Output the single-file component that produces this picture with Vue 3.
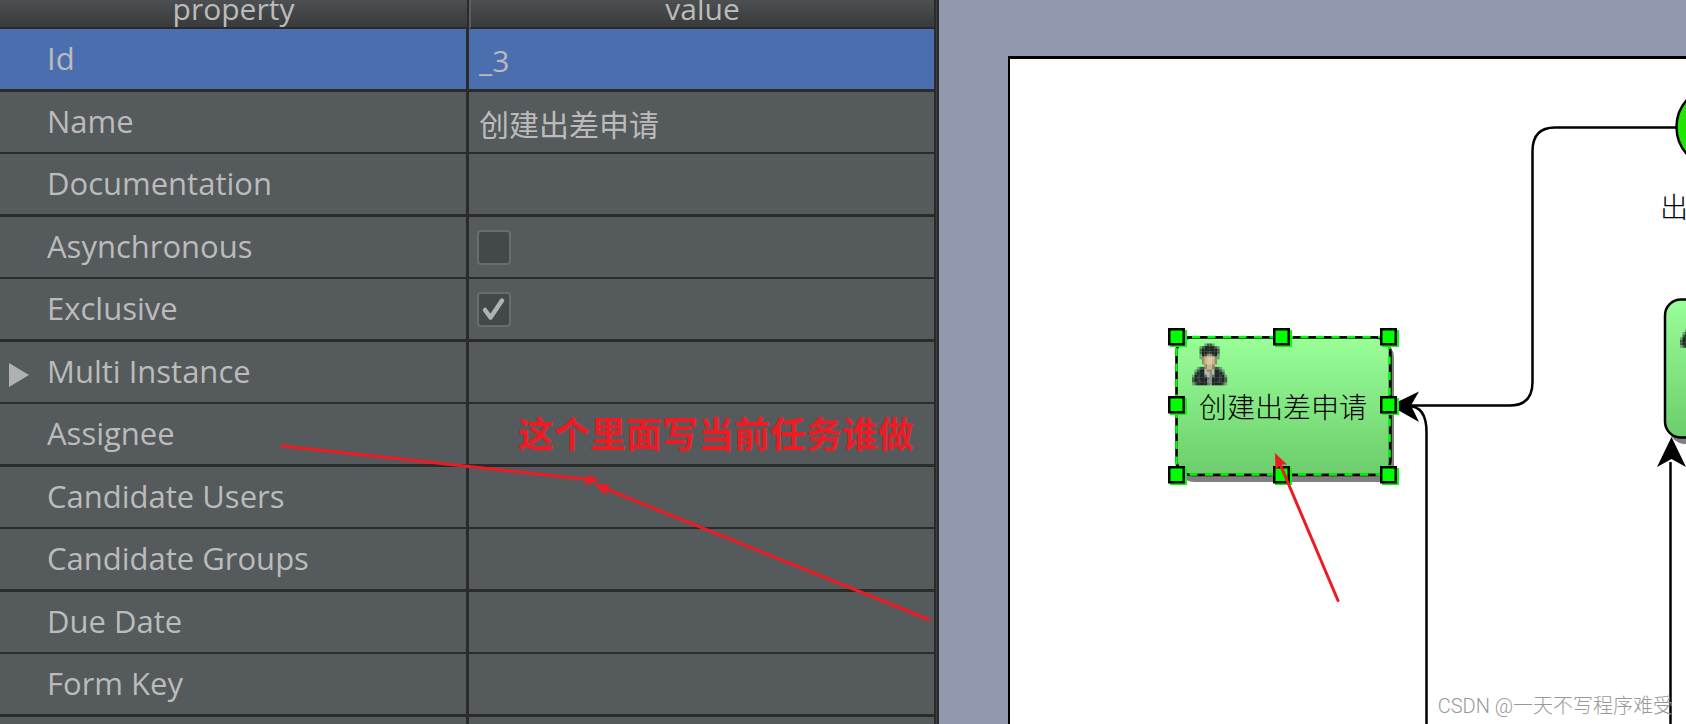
<script setup>
import { ref } from 'vue'

const rows = ref([
  { label: 'Id', kind: 'text', value: '_3', selected: true },
  { label: 'Name', kind: 'text', value: '创建出差申请' },
  { label: 'Documentation', kind: 'empty' },
  { label: 'Asynchronous', kind: 'check', value: false },
  { label: 'Exclusive', kind: 'check', value: true },
  { label: 'Multi Instance', kind: 'empty', expandable: true },
  { label: 'Assignee', kind: 'empty' },
  { label: 'Candidate Users', kind: 'empty' },
  { label: 'Candidate Groups', kind: 'empty' },
  { label: 'Due Date', kind: 'empty' },
  { label: 'Form Key', kind: 'empty' },
  { label: '', kind: 'empty' },
])

const handles = [
  [1168, 328], [1273, 328], [1380, 328],
  [1168, 396], [1380, 396],
  [1168, 466], [1273, 466], [1380, 466],
]

const palette = {
  g: '#6aa870', d: '#46604c', k: '#222527', m: '#36393c', h: '#4a4a44',
  b: '#9c8766', s: '#cdb48e', l: '#dcc8a6', w: '#b4b8ba', e: '#8a8c8f', t: '#6b6d70',
}
const sprite = [
  '.....gddg.....',
  '...gdkkkkdg...',
  '...dkkkkkkd...',
  '...dkkmmkkd...',
  '...gkhbbhkg...',
  '...gbslllbg...',
  '....bsllsb....',
  '....bsllsb....',
  '.....bssb.....',
  '..gdhbssbhdg..',
  '.gdkkwbbwkkdg.',
  '.dkkkwwewkkkd.',
  'gkmkktwetkkmkg',
  'dkmkkktekkkmkd',
  'dkmmkkeekkmmkd',
  'gdkkkktekkkkdg',
]
const pixels = sprite.flatMap((line, y) =>
  [...line].map((c, x) => ({ x, y, fill: palette[c] })).filter((p) => p.fill)
)
</script>

<template>
  <main class="editor">
    <section class="properties">
      <table>
        <thead>
          <tr>
            <th scope="col">property</th>
            <th scope="col">value</th>
          </tr>
        </thead>
        <tbody>
          <tr v-for="(row, i) in rows" :key="i" :class="{ selected: row.selected }">
            <th scope="row">
              <span class="name">
                <button v-if="row.expandable" class="expander" aria-label="Expand Multi Instance">
                  <svg width="20" height="24" viewBox="0 0 20 24"><path d="M0 0L20 12L0 24Z" fill="#afb1b3" /></svg>
                </button>
                <label :for="row.kind === 'empty' ? undefined : 'field-' + i">{{ row.label }}</label>
              </span>
            </th>
            <td>
              <input v-if="row.kind === 'text'" :id="'field-' + i" v-model="row.value" type="text" />
              <span v-else-if="row.kind === 'check'" class="check">
                <input :id="'field-' + i" v-model="row.value" type="checkbox" />
                <svg v-if="row.value" width="34" height="35" viewBox="0 0 34 35">
                  <path d="M8 18L13.500 25.500L25 8.500" fill="none" stroke="#afb1b3" stroke-width="4.500" stroke-linecap="round" stroke-linejoin="round" />
                </svg>
              </span>
            </td>
          </tr>
        </tbody>
      </table>
    </section>

    <section class="canvas">
      <div class="paper"></div>
      <svg class="diagram" width="747" height="724" viewBox="939 0 747 724">
        <defs>
          <linearGradient id="task" x1="0" y1="0" x2="0" y2="1">
            <stop offset="0" stop-color="#99ff99" />
            <stop offset="1" stop-color="#6bcd6b" />
          </linearGradient>
          <linearGradient id="start" x1="0" y1="0" x2="0" y2="1">
            <stop offset="0" stop-color="#33dd11" />
            <stop offset="0.5" stop-color="#1ee600" />
            <stop offset="1" stop-color="#11f000" />
          </linearGradient>
          <g id="person">
            <rect v-for="p in pixels" :key="p.x + '-' + p.y" :x="p.x * 2.5" :y="p.y * 2.6" width="2.7" height="2.8" :fill="p.fill" />
          </g>
        </defs>

        <g fill="none" stroke="#000" stroke-width="2.5">
          <path d="M1676 127.500H1555Q1532.500 127.500 1532.500 151V382Q1532.500 405.500 1510 405.500H1408" />
          <path d="M1408 406Q1426.500 406 1426.500 432V724" />
          <path d="M1670.500 462V724" />
        </g>
        <path d="M1390 405.500L1419 391.500L1411 405.500L1419 422Z" />
        <path d="M1671.500 437L1686 467L1671.500 459L1657 467Z" />

        <circle cx="1717" cy="127" r="40.500" fill="url(#start)" stroke="#000" stroke-width="2.500" />
        <text class="caption" x="1660" y="218">出</text>

        <rect x="1669" y="305" width="214" height="139" rx="16" fill="#808080" />
        <rect x="1665" y="299.500" width="214" height="138" rx="16" fill="url(#task)" stroke="#000" stroke-width="2.500" />
        <use href="#person" x="1680" y="306" />

        <rect x="1180" y="343" width="214" height="139" rx="14" fill="#808080" />
        <rect x="1176.500" y="337.500" width="214" height="137.500" rx="15" fill="url(#task)" stroke="#000" stroke-width="2.500" />
        <rect x="1176.500" y="337" width="213" height="137.500" fill="none" stroke="#000" stroke-width="1.500" />
        <rect x="1176.500" y="337" width="213" height="137.500" fill="none" stroke="#00ff00" stroke-width="2.500" stroke-dasharray="8 7.500" />
        <use href="#person" x="1192" y="343.500" />
        <text class="caption" x="1199" y="418">创建出差申请</text>

        <g v-for="[x, y] in handles" :key="x + '-' + y">
          <rect :x="x + 2" :y="y + 2" width="17" height="17" fill="#00ff00" />
          <rect :x="x + 1.25" :y="y + 1.25" width="14.500" height="15" fill="#00ff00" stroke="#000" stroke-width="2.500" />
        </g>
      </svg>
      <p class="watermark">CSDN @一天不写程序难受</p>
    </section>

    <svg class="annotations">
      <g fill="none" stroke="#ed1c24" stroke-width="3" stroke-linecap="round">
        <path d="M282 446L588 479.500" />
        <path d="M929 619.500L606 489" />
        <path d="M1338 600.500L1280 464" />
      </g>
      <g fill="#ed1c24">
        <path d="M600 480.500L586 474L588 479.500L584 485.500Z" />
        <path d="M594 484L611 484.500L606 489L606 495.500Z" />
        <path d="M1275 453L1287 464.500L1281 464.500L1275.500 470Z" />
      </g>
      <text x="518" y="448">这个里面写当前任务谁做</text>
    </svg>
  </main>
</template>

<style>
html,
body {
  margin: 0;
  background: #9199ae;
}
</style>

<style scoped>
.editor {
  position: relative;
  display: grid;
  grid-template-columns: minmax(0, 939fr) minmax(0, 747fr);
  height: 100vh;
  overflow: hidden;
}

.properties {
  box-sizing: border-box;
  overflow: hidden;
  border-right: 2px solid #2b2b2b;
  background: #3c3f41;
  padding-right: 1px;
  font-family: "Open Sans", "Noto Sans", "Noto Sans CJK SC", sans-serif;
  color: #bbbbbb;
}

table {
  width: 100%;
  table-layout: fixed;
  border-collapse: separate;
  border-spacing: 0;
  border-right: 2px solid #2b2b2b;
}

th,
td {
  box-sizing: border-box;
  padding: 0;
  font-weight: 400;
  text-align: left;
}

thead th {
  height: 29px;
  border-bottom: 2px solid #2b2b2b;
  background: linear-gradient(#4c5052, #383a3b);
  font-size: 30px;
  line-height: 18px;
  text-align: center;
  vertical-align: top;
}

thead th:first-child {
  width: 469px;
  border-right: 2px solid #2b2b2b;
}

thead th:last-child {
  border-left: 2px solid #5b5e60;
}

tbody th,
tbody td {
  height: 63px;
  border-bottom: 3px solid #2b2b2b;
  background: #555a5c;
}

tbody tr:nth-child(even) th,
tbody tr:nth-child(even) td {
  height: 62px;
  border-bottom-width: 2px;
}

tbody th {
  padding-bottom: 3px;
  border-right: 3px solid #2b2b2b;
  font-size: 31px;
  line-height: 40px;
}

tbody tr.selected th,
tbody tr.selected td {
  background: #4b6eaf;
}

.name {
  position: relative;
  display: block;
  padding-left: 47px;
}

.expander {
  position: absolute;
  left: 9px;
  top: 12px;
  padding: 0;
  border: 0;
  background: none;
  line-height: 0;
}

td input[type="text"] {
  display: block;
  box-sizing: border-box;
  width: 100%;
  height: 50px;
  margin: 0;
  padding: 2px 10px 0;
  border: 0;
  outline: 0;
  background: none;
  color: inherit;
  font: inherit;
  font-size: 30px;
}

.check {
  position: relative;
  display: block;
  width: 34px;
  height: 35px;
  margin-left: 8px;
}

.check input {
  display: block;
  appearance: none;
  box-sizing: border-box;
  width: 34px;
  height: 35px;
  margin: 0;
  border: 2px solid #6b6b6b;
  border-radius: 4px;
  background: #43494a;
}

.check svg {
  position: absolute;
  inset: 0;
  pointer-events: none;
}

.canvas {
  position: relative;
  overflow: hidden;
  padding: 56px 0 0 69px;
  background: #9199ae;
}

.paper {
  height: 100%;
  border: solid #000;
  border-width: 3px 0 0 2px;
  background: #fff;
}

.diagram {
  position: absolute;
  left: 0;
  top: 0;
}

.caption {
  font: 300 28px "Noto Sans CJK SC", sans-serif;
}

.watermark {
  position: absolute;
  right: 13px;
  bottom: 3px;
  margin: 0;
  color: #999;
  font: 300 20px/30px Roboto, "Noto Sans CJK SC", sans-serif;
  white-space: nowrap;
}

.annotations {
  position: absolute;
  inset: 0;
  width: 100%;
  height: 100%;
  pointer-events: none;
}

.annotations text {
  fill: #ed1c24;
  font: 700 36px "Noto Sans CJK SC", sans-serif;
}
</style>
